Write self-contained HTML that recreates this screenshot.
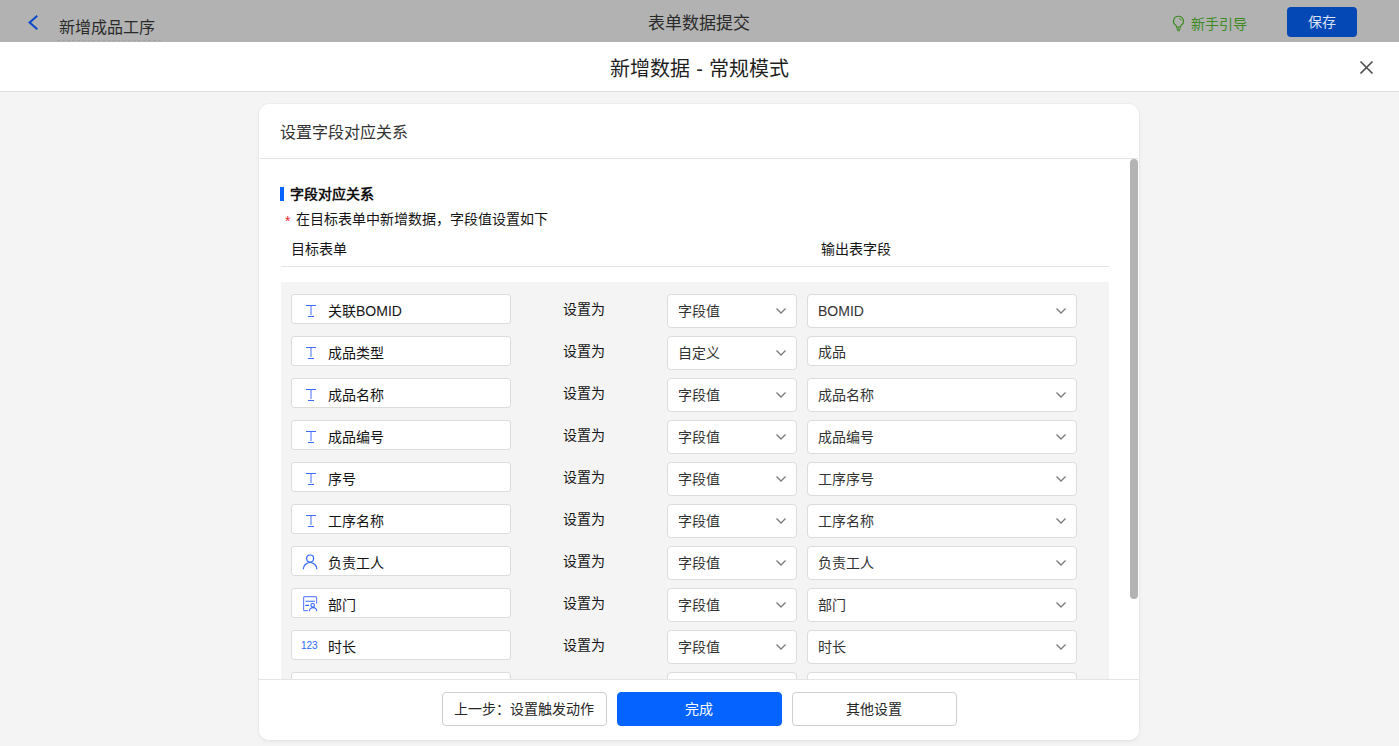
<!DOCTYPE html>
<html lang="zh-CN"><head><meta charset="utf-8"><title>表单数据提交</title>
<style>
*{box-sizing:border-box;margin:0;padding:0}
html,body{width:1399px;height:746px;overflow:hidden;background:#f4f4f4;font-family:"Liberation Sans",sans-serif;color:#1f1f1f;font-size:14px}
.abs{position:absolute}
#top{position:absolute;left:0;top:0;width:1399px;height:42px;background:#b2b2b2}
#top .back{position:absolute;left:27px;top:13px}
#top .name{position:absolute;left:57px;top:15px;width:104px;font-size:16px;line-height:22px;color:#2a2a2a;border-bottom:1px dashed #a4a4a4;height:26px;padding:2px 0 0 2px}
#top .ttl{position:absolute;left:0;width:1397px;text-align:center;top:13px;font-size:17px;line-height:22px;color:#2a2a2a}
#top .guide{position:absolute;left:1191px;top:14px;font-size:14px;line-height:20px;color:#3d8a1e}
#top .bulb{position:absolute;left:1172px;top:15px}
#top .save{position:absolute;left:1287px;top:7px;width:70px;height:30px;border-radius:4px;background:#0448b5;color:#d8e2f5;font-size:14px;line-height:30px;text-align:center}
#mh{position:absolute;left:0;top:42px;width:1399px;height:50px;background:#fff;border-bottom:1px solid #dedede}
#mh .t{position:absolute;left:0;width:1399px;text-align:center;top:13px;word-spacing:0.5px;font-size:20px;line-height:28px;color:#1f1f1f}
#mh .x{position:absolute;left:1359px;top:18px}
#card{position:absolute;left:259px;top:104px;width:880px;height:636px;background:#fff;border-radius:10px;overflow:hidden;box-shadow:0 0 0 1px rgba(0,0,0,.025),0 2px 4px rgba(0,0,0,.05)}
#card .ct{position:absolute;left:21px;top:17px;font-size:16px;line-height:24px;color:#333}
#card .hr1{position:absolute;left:1px;top:54px;width:878px;height:1px;background:#e4e4e4}
#body{position:absolute;left:0;top:55px;width:880px;height:520px;overflow:hidden}
.bar{position:absolute;left:21px;top:28px;width:4px;height:14px;background:#0564ff}
.sec{position:absolute;left:31px;top:24px;font-size:14px;line-height:22px;font-weight:bold;color:#111}
.req{position:absolute;left:26px;top:49px;font-size:14px;line-height:22px;color:#141414}
.req i{color:#f5222d;font-style:normal;font-size:14px;margin-right:6px;position:relative;top:2px}
.h1{position:absolute;left:32px;top:79px;font-size:14px;line-height:22px;color:#141414}
.h2{position:absolute;left:562px;top:79px;font-size:14px;line-height:22px;color:#141414}
.hr2{position:absolute;left:22px;top:107px;width:828px;height:1px;background:#e4e4e4}
#gray{position:absolute;left:22px;top:123px;width:828px;height:420px;background:#f4f4f4}
.row{position:absolute;left:0;width:828px;height:34px}
.fld{position:absolute;left:10px;top:0;width:220px;height:30px;background:#fff;border:1px solid #dcdcdc;border-radius:3px}
.fld .ic{position:absolute}
.fld .t{left:14px;top:10px}
.fld .u{left:10px;top:6px}
.fld .n123{left:9px;top:9px;font-size:10px;line-height:12px;color:#2f66ff}
.fld .ft{position:absolute;left:36px;top:5px;font-size:14px;line-height:22px;color:#141414;white-space:nowrap}
.setas{position:absolute;left:282px;top:4px;font-size:14px;line-height:22px;color:#141414}
.sel{position:absolute;top:0;height:34px;background:#fff;border:1px solid #dcdcdc;border-radius:4px}
.sel span{position:absolute;left:10px;top:5px;font-size:14px;line-height:22px;color:#333;white-space:nowrap}
.sel .chev{position:absolute;right:9px;top:12px}
.s1{left:386px;width:130px}
.s2{left:526px;width:270px}
.s2.inp{height:30px}
.s2.inp span{top:4px}
#sb{position:absolute;left:871px;top:55px;width:8px;height:440px;background:#b3b3b3;border-radius:4px}
#foot{position:absolute;left:0;top:575px;width:880px;height:61px;background:#fff;border-top:1px solid #e4e4e4}
.btn{position:absolute;top:12px;width:165px;height:34px;border:1px solid #cfcfcf;border-radius:4px;background:#fff;font-size:14px;line-height:32px;text-align:center;color:#262626;padding-right:2px}
.btn.p{background:#0564ff;border-color:#0564ff;color:#fff}
</style></head><body>
<div id="top">
 <svg class="back" width="12" height="18" viewBox="0 0 12 18"><path d="M10.300 2.700L2.600 9.500l7.700 6.800" fill="none" stroke="#0a47c9" stroke-width="2"/></svg>
 <div class="name">新增成品工序</div>
 <div class="ttl">表单数据提交</div>
 <svg class="bulb" width="13" height="17" viewBox="0 0 14 18"><path d="M7 1.200a5.300 5.300 0 0 0-3 9.700c.6.500.9 1.100.9 1.800v.3h4.200v-.3c0-.7.300-1.300.9-1.800A5.300 5.300 0 0 0 7 1.200z" fill="none" stroke="#3d8a1e" stroke-width="1.300"/><path d="M4.800 15h4.400M5.500 16.800h3" fill="none" stroke="#3d8a1e" stroke-width="1.200"/><path d="M7.500 3.500a3 3 0 0 1 2.300 2.300" fill="none" stroke="#3d8a1e" stroke-width="1"/></svg>
 <div class="guide">新手引导</div>
 <div class="save">保存</div>
</div>
<div id="mh"><div class="t">新增数据 - 常规模式</div>
 <svg class="x" width="15" height="15" viewBox="0 0 15 15"><path d="M1.500 1.500l12 12M13.500 1.500l-12 12" fill="none" stroke="#4a4a4a" stroke-width="1.600"/></svg>
</div>
<div id="card">
 <div class="ct">设置字段对应关系</div>
 <div class="hr1"></div>
 <div id="body">
  <div class="bar"></div><div class="sec">字段对应关系</div>
  <div class="req"><i>*</i>在目标表单中新增数据，字段值设置如下</div>
  <div class="h1">目标表单</div><div class="h2">输出表字段</div>
  <div class="hr2"></div>
  <div id="gray">
<div class="row" style="top:12px"><div class="fld"><svg class="ic t" width="12" height="14" viewBox="0 0 12 14"><path d="M0 0.500h10M2 11.500h6" fill="none" stroke="#3d6dff" stroke-width="1" shape-rendering="crispEdges"/><path d="M5 1v9" fill="none" stroke="#4a6cff" stroke-width="1"/></svg><span class="ft">关联BOMID</span></div><div class="setas">设置为</div><div class="sel s1"><span>字段值</span><svg class="chev" width="12" height="8" viewBox="0 0 12 8"><path d="M1.500 1.500L6 6l4.500-4.500" fill="none" stroke="#7a7a7a" stroke-width="1.300"/></svg></div><div class="sel s2"><span>BOMID</span><svg class="chev" width="12" height="8" viewBox="0 0 12 8"><path d="M1.500 1.500L6 6l4.500-4.500" fill="none" stroke="#7a7a7a" stroke-width="1.300"/></svg></div></div>
<div class="row" style="top:54px"><div class="fld"><svg class="ic t" width="12" height="14" viewBox="0 0 12 14"><path d="M0 0.500h10M2 11.500h6" fill="none" stroke="#3d6dff" stroke-width="1" shape-rendering="crispEdges"/><path d="M5 1v9" fill="none" stroke="#4a6cff" stroke-width="1"/></svg><span class="ft">成品类型</span></div><div class="setas">设置为</div><div class="sel s1"><span>自定义</span><svg class="chev" width="12" height="8" viewBox="0 0 12 8"><path d="M1.500 1.500L6 6l4.500-4.500" fill="none" stroke="#7a7a7a" stroke-width="1.300"/></svg></div><div class="sel s2 inp"><span>成品</span></div></div>
<div class="row" style="top:96px"><div class="fld"><svg class="ic t" width="12" height="14" viewBox="0 0 12 14"><path d="M0 0.500h10M2 11.500h6" fill="none" stroke="#3d6dff" stroke-width="1" shape-rendering="crispEdges"/><path d="M5 1v9" fill="none" stroke="#4a6cff" stroke-width="1"/></svg><span class="ft">成品名称</span></div><div class="setas">设置为</div><div class="sel s1"><span>字段值</span><svg class="chev" width="12" height="8" viewBox="0 0 12 8"><path d="M1.500 1.500L6 6l4.500-4.500" fill="none" stroke="#7a7a7a" stroke-width="1.300"/></svg></div><div class="sel s2"><span>成品名称</span><svg class="chev" width="12" height="8" viewBox="0 0 12 8"><path d="M1.500 1.500L6 6l4.500-4.500" fill="none" stroke="#7a7a7a" stroke-width="1.300"/></svg></div></div>
<div class="row" style="top:138px"><div class="fld"><svg class="ic t" width="12" height="14" viewBox="0 0 12 14"><path d="M0 0.500h10M2 11.500h6" fill="none" stroke="#3d6dff" stroke-width="1" shape-rendering="crispEdges"/><path d="M5 1v9" fill="none" stroke="#4a6cff" stroke-width="1"/></svg><span class="ft">成品编号</span></div><div class="setas">设置为</div><div class="sel s1"><span>字段值</span><svg class="chev" width="12" height="8" viewBox="0 0 12 8"><path d="M1.500 1.500L6 6l4.500-4.500" fill="none" stroke="#7a7a7a" stroke-width="1.300"/></svg></div><div class="sel s2"><span>成品编号</span><svg class="chev" width="12" height="8" viewBox="0 0 12 8"><path d="M1.500 1.500L6 6l4.500-4.500" fill="none" stroke="#7a7a7a" stroke-width="1.300"/></svg></div></div>
<div class="row" style="top:180px"><div class="fld"><svg class="ic t" width="12" height="14" viewBox="0 0 12 14"><path d="M0 0.500h10M2 11.500h6" fill="none" stroke="#3d6dff" stroke-width="1" shape-rendering="crispEdges"/><path d="M5 1v9" fill="none" stroke="#4a6cff" stroke-width="1"/></svg><span class="ft">序号</span></div><div class="setas">设置为</div><div class="sel s1"><span>字段值</span><svg class="chev" width="12" height="8" viewBox="0 0 12 8"><path d="M1.500 1.500L6 6l4.500-4.500" fill="none" stroke="#7a7a7a" stroke-width="1.300"/></svg></div><div class="sel s2"><span>工序序号</span><svg class="chev" width="12" height="8" viewBox="0 0 12 8"><path d="M1.500 1.500L6 6l4.500-4.500" fill="none" stroke="#7a7a7a" stroke-width="1.300"/></svg></div></div>
<div class="row" style="top:222px"><div class="fld"><svg class="ic t" width="12" height="14" viewBox="0 0 12 14"><path d="M0 0.500h10M2 11.500h6" fill="none" stroke="#3d6dff" stroke-width="1" shape-rendering="crispEdges"/><path d="M5 1v9" fill="none" stroke="#4a6cff" stroke-width="1"/></svg><span class="ft">工序名称</span></div><div class="setas">设置为</div><div class="sel s1"><span>字段值</span><svg class="chev" width="12" height="8" viewBox="0 0 12 8"><path d="M1.500 1.500L6 6l4.500-4.500" fill="none" stroke="#7a7a7a" stroke-width="1.300"/></svg></div><div class="sel s2"><span>工序名称</span><svg class="chev" width="12" height="8" viewBox="0 0 12 8"><path d="M1.500 1.500L6 6l4.500-4.500" fill="none" stroke="#7a7a7a" stroke-width="1.300"/></svg></div></div>
<div class="row" style="top:264px"><div class="fld"><svg class="ic u" width="16" height="18" viewBox="0 0 16 18"><circle cx="8.100" cy="5.500" r="3.500" fill="none" stroke="#2f66ff" stroke-width="1.200"/><path d="M1.300 16.300A6.800 6.800 0 0 1 14.900 16.300" fill="none" stroke="#2f66ff" stroke-width="1.200"/></svg><span class="ft">负责工人</span></div><div class="setas">设置为</div><div class="sel s1"><span>字段值</span><svg class="chev" width="12" height="8" viewBox="0 0 12 8"><path d="M1.500 1.500L6 6l4.500-4.500" fill="none" stroke="#7a7a7a" stroke-width="1.300"/></svg></div><div class="sel s2"><span>负责工人</span><svg class="chev" width="12" height="8" viewBox="0 0 12 8"><path d="M1.500 1.500L6 6l4.500-4.500" fill="none" stroke="#7a7a7a" stroke-width="1.300"/></svg></div></div>
<div class="row" style="top:306px"><div class="fld"><svg class="ic u" width="16" height="18" viewBox="0 0 16 18"><path d="M14.600 8.800V2.700a1 1 0 0 0-1-1H2.600a1 1 0 0 0-1 1v12a1 1 0 0 0 1 1H5.900" fill="none" stroke="#6e86ff" stroke-width="1.200"/><path d="M3.500 6.300h9.400M3.300 10.400H7" fill="none" stroke="#2f66ff" stroke-width="1.100"/><circle cx="10.700" cy="10.200" r="1.750" fill="none" stroke="#2f66ff" stroke-width="1.100"/><path d="M7.400 16.300A3.700 3.700 0 0 1 14.800 16.300" fill="none" stroke="#2f66ff" stroke-width="1.100"/></svg><span class="ft">部门</span></div><div class="setas">设置为</div><div class="sel s1"><span>字段值</span><svg class="chev" width="12" height="8" viewBox="0 0 12 8"><path d="M1.500 1.500L6 6l4.500-4.500" fill="none" stroke="#7a7a7a" stroke-width="1.300"/></svg></div><div class="sel s2"><span>部门</span><svg class="chev" width="12" height="8" viewBox="0 0 12 8"><path d="M1.500 1.500L6 6l4.500-4.500" fill="none" stroke="#7a7a7a" stroke-width="1.300"/></svg></div></div>
<div class="row" style="top:348px"><div class="fld"><span class="ic n123">123</span><span class="ft">时长</span></div><div class="setas">设置为</div><div class="sel s1"><span>字段值</span><svg class="chev" width="12" height="8" viewBox="0 0 12 8"><path d="M1.500 1.500L6 6l4.500-4.500" fill="none" stroke="#7a7a7a" stroke-width="1.300"/></svg></div><div class="sel s2"><span>时长</span><svg class="chev" width="12" height="8" viewBox="0 0 12 8"><path d="M1.500 1.500L6 6l4.500-4.500" fill="none" stroke="#7a7a7a" stroke-width="1.300"/></svg></div></div>
<div class="row" style="top:390px"><div class="fld"><span class="ft"></span></div><div class="setas">设置为</div><div class="sel s1"><span>字段值</span><svg class="chev" width="12" height="8" viewBox="0 0 12 8"><path d="M1.500 1.500L6 6l4.500-4.500" fill="none" stroke="#7a7a7a" stroke-width="1.300"/></svg></div><div class="sel s2"><span></span><svg class="chev" width="12" height="8" viewBox="0 0 12 8"><path d="M1.500 1.500L6 6l4.500-4.500" fill="none" stroke="#7a7a7a" stroke-width="1.300"/></svg></div></div>
  </div>
 </div>
 <div id="sb"></div>
 <div id="foot">
  <div class="btn" style="left:183px">上一步：设置触发动作</div>
  <div class="btn p" style="left:358px">完成</div>
  <div class="btn" style="left:533px">其他设置</div>
 </div>
</div>
</body></html>
